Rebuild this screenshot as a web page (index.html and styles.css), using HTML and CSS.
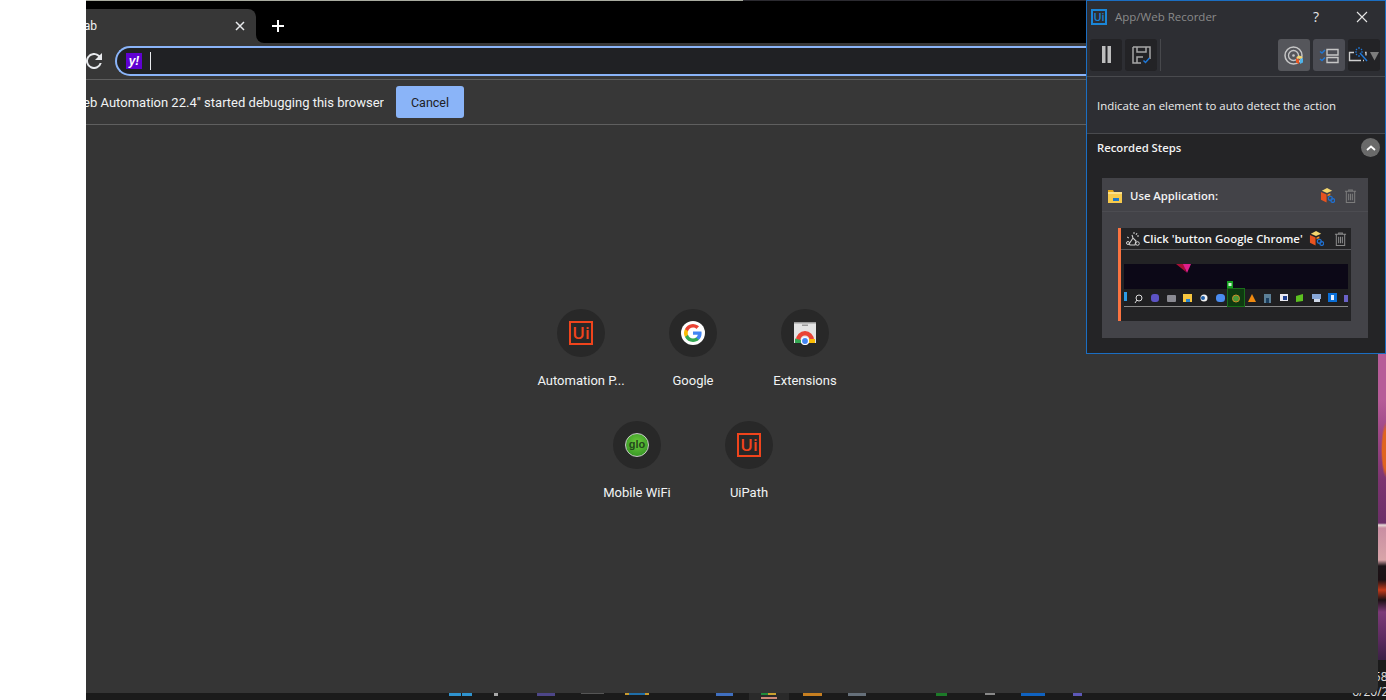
FILE: index.html
```html
<!DOCTYPE html>
<html lang="en">
<head>
<meta charset="utf-8">
<title>App/Web Recorder</title>
<link rel="stylesheet" href="styles.css">
</head>
<body>
<svg class="defs" width="0" height="0" aria-hidden="true">
  <symbol id="cube" viewBox="0 0 16 16">
    <path d="M7.500 0 13 2.800 7.500 5.400 2 2.800z" fill="#f5d76e"/>
    <path d="M1 4.200 7 7v8.500L1 12.600z" fill="#e8531f"/>
    <path d="M8 7l3-1.400V8a3 3 0 0 0-3 1z" fill="#f08a24"/>
    <circle cx="11" cy="11" r="2.100" fill="none" stroke="#1f6fd0" stroke-width="1.300"/>
    <circle cx="13.600" cy="13.400" r="2" fill="none" stroke="#1f6fd0" stroke-width="1.300"/>
  </symbol>
  <symbol id="trash" viewBox="0 0 14 15">
    <path d="M1 2.500h12M5 2.500V1h4v1.500M2.500 2.500v12h9v-12M5 5v7M7 5v7M9 5v7" fill="none" stroke="currentColor" stroke-width="1.100"/>
  </symbol>
</svg>
<div class="screen">
  <div class="blank"></div>
  <main class="desktop">
    <div class="wallpaper"></div>
    <footer class="taskbar">
      <div class="task-icons">
        <span class="sl s1"></span><span class="sl s2"></span><span class="sl s3"></span><span class="sl s4"></span><span class="sl s5"></span><span class="sl s6"></span><span class="sl s7"></span>
        <span class="task-active"><span class="sl s8"></span><span class="sl s9"></span></span>
        <span class="sl s10"></span><span class="sl s11"></span><span class="sl s12"></span><span class="sl s13"></span><span class="sl s14"></span><span class="sl s15"></span>
      </div>
      <div class="clock"><span>10:58 AM</span><span>6/20/2022</span></div>
    </footer>

    <section class="browser">
      <div class="topline"><span class="topline-a"></span><span class="topline-b"></span></div>
      <div class="strip">
        <div class="tab-wrap">
          <div class="tab">
            <div class="tab-label"><span>New Tab</span></div>
            <svg class="tab-close" viewBox="0 0 10 10"><path d="M1 1l8 8M9 1l-8 8" stroke="#e8eaed" stroke-width="1.500"/></svg>
          </div>
        </div>
        <div class="strip-rest">
          <svg class="new-tab" viewBox="0 0 14 14"><path d="M7 1v12M1 7h12" stroke="#fff" stroke-width="2"/></svg>
        </div>
      </div>
      <div class="toolbar">
        <svg class="reload" viewBox="4 4 16 16"><path fill="#e8eaed" d="M17.650 6.350A8 8 0 1 0 19.730 14h-2.080A6 6 0 1 1 12 6c1.660 0 3.140.69 4.220 1.780L13 11h7V4l-2.350 2.350z"/></svg>
        <div class="omnibox">
          <span class="yahoo">y!</span>
          <span class="caret"></span>
        </div>
      </div>
      <div class="infobar">
        <div class="info-text"><span>"UiPath Web Automation 22.4" started debugging this browser</span></div>
        <button class="cancel">Cancel</button>
      </div>
      <div class="ntp">
        <div class="tiles">
          <a class="tile"><span class="tile-icon"><span class="ui-logo">Ui</span></span><span class="tile-name">Automation P...</span></a>
          <a class="tile"><span class="tile-icon">
            <svg class="fav" viewBox="0 0 24 24"><circle cx="12" cy="12" r="12" fill="#fff"/>
              <path fill="#4285f4" d="M20.600 12.200c0-.62-.06-1.220-.16-1.800H12v3.400h4.830a4.130 4.130 0 0 1-1.790 2.710v2.250h2.900c1.700-1.560 2.660-3.860 2.660-6.560z"/>
              <path fill="#34a853" d="M12 21c2.430 0 4.460-.8 5.940-2.170l-2.900-2.250c-.8.540-1.830.86-3.040.86-2.340 0-4.320-1.580-5.030-3.700H4v2.330A9 9 0 0 0 12 21z"/>
              <path fill="#fbbc05" d="M6.970 13.740a5.400 5.400 0 0 1 0-3.480V7.930H4a9 9 0 0 0 0 8.140z"/>
              <path fill="#ea4335" d="M12 6.580c1.320 0 2.500.45 3.440 1.350l2.580-2.580A9 9 0 0 0 4 7.930l2.970 2.330C7.680 8.160 9.660 6.580 12 6.580z"/></svg>
          </span><span class="tile-name">Google</span></a>
          <a class="tile"><span class="tile-icon">
            <svg class="fav" viewBox="0 0 24 24">
              <path fill="#e4e4e4" d="M1 1h22v21H1z"/><path fill="#9a9a9a" d="M1 1h22v1.500H1zM9 3.500h6v1.500H9z"/>
              <path fill="#ea4335" d="M3 19a9 9 0 0 1 18 0h-4.500A4.500 4.500 0 0 0 7.500 19z"/>
              <path fill="#fbbc05" d="M16 18h6v4h-6z"/><path fill="#34a853" d="M2 17.500 8 19v3H2z"/>
              <circle cx="12" cy="20" r="3.500" fill="#4285f4" stroke="#fff" stroke-width="1.200"/>
            </svg>
          </span><span class="tile-name">Extensions</span></a>
          <a class="tile"><span class="tile-icon"><span class="glo">glo</span></span><span class="tile-name">Mobile WiFi</span></a>
          <a class="tile"><span class="tile-icon"><span class="ui-logo">Ui</span></span><span class="tile-name">UiPath</span></a>
        </div>
      </div>
    </section>

    <aside class="recorder">
      <header class="rec-title">
        <span class="rec-logo">Ui</span>
        <span class="rec-name">App/Web Recorder</span>
        <span class="rec-help">?</span>
        <svg class="rec-close" viewBox="0 0 12 12"><path d="M1 1l10 10M11 1 1 11" stroke="#e6e6e6" stroke-width="1.100"/></svg>
      </header>
      <div class="rec-tools">
        <button class="tool"><svg viewBox="0 0 32 32"><path d="M12 7h3.500v17H12zM17.500 7H21v17h-3.500z" fill="#bdbdbd"/></svg></button>
        <button class="tool"><svg viewBox="0 0 32 32"><path d="M8 8h17v12M8 8v16h8M12 8v5h9V8M12 24v-6h6" fill="none" stroke="#a6a6a6" stroke-width="1.500"/><path d="M18.500 21.500l2 2 4-4.500" fill="none" stroke="#1f78d8" stroke-width="1.500"/></svg></button>
        <span class="tool-sep"></span>
        <button class="tool tool-on tool-push"><svg viewBox="0 0 32 32"><circle cx="15.500" cy="16.500" r="8.500" fill="none" stroke="#c6c6c6" stroke-width="1.500"/><circle cx="15.500" cy="16.500" r="5" fill="none" stroke="#c6c6c6" stroke-width="1.300"/><circle cx="15.500" cy="16.500" r="1.300" fill="#c6c6c6"/><path d="M21.500 16.500l3.500 1.800-3.500 1.800-3.500-1.800z" fill="#f5d76e"/><path d="M18 19l3 1.500v4.500l-3-1.500z" fill="#e8531f"/><path d="M22 20.500l3-1.500v4.500L22 25z" fill="#4fb3e8"/></svg></button>
        <button class="tool tool-list"><svg viewBox="0 0 32 32"><path d="M14 10.500h11v5.500H14zM14 18.500h11v5H14z" fill="none" stroke="#c6c6c6" stroke-width="1.400"/><path d="M7 12.500l2 1.500 3-3M7 20l2 1.500 3-3" fill="none" stroke="#1f78d8" stroke-width="1.400"/></svg></button>
        <button class="tool"><svg viewBox="0 0 32 32"><path d="M6 13.500H1.500v8H13M15 21.500h1" fill="none" stroke="#cfcfcf" stroke-width="1.400"/><path d="M17 13.500h1v3" fill="none" stroke="#cfcfcf" stroke-width="1.300"/><path d="M8 10l1 1M11 8v2M14 10l-1 1M7 13h2M15 13h-2M8 16l1-1M11 18v-2" stroke="#1f78d8" stroke-width="1.200"/><path d="M12 14l7 8" stroke="#1f78d8" stroke-width="1.500"/><path d="M22 13h9l-4.500 8.500z" fill="#7d7d7d"/></svg></button>
      </div>
      <div class="rec-hint">Indicate an element to auto detect the action</div>
      <div class="rec-steps">
        <div class="steps-head">
          <span class="steps-title">Recorded Steps</span>
          <span class="steps-toggle"><svg viewBox="0 0 10 6"><path d="M1 5l4-3.500L9 5" fill="none" stroke="#fff" stroke-width="1.800"/></svg></span>
        </div>
        <div class="card">
          <div class="card-head">
            <svg class="folder" viewBox="0 0 15 14"><path d="M0 1h5l1 2H0z" fill="#e6a817"/><path d="M0 3h14v11H0z" fill="#f7ca4c"/><path d="M0 3h14v2H0z" fill="#fbe08a"/><path d="M5 9h6v3H5z" fill="#1f78c8"/></svg>
            <span class="card-title">Use Application:</span>
            <svg class="cube"><use href="#cube"/></svg>
            <svg class="trash"><use href="#trash"/></svg>
          </div>
          <div class="step">
            <div class="step-head">
              <svg class="click" viewBox="0 0 14 15"><path d="M3 13 7 7l3 3-1 4H4zM7 7l-1-3" fill="none" stroke="#d0d0d0" stroke-width="1.100"/><path d="M8 1v2M11 2l-1 2M13 5h-2M1 6l2 1" stroke="#d0d0d0"/><circle cx="11.500" cy="12.500" r="1.800" fill="none" stroke="#d0d0d0"/><circle cx="2" cy="12" r="1.500" fill="none" stroke="#d0d0d0"/></svg>
              <span class="step-title">Click 'button Google Chrome'</span>
              <svg class="cube cube-step"><use href="#cube"/></svg>
              <svg class="trash trash-step"><use href="#trash"/></svg>
            </div>
            <div class="step-body">
              <svg class="shot" viewBox="0 0 224 43">
                <rect width="224" height="25" fill="#0c0817"/>
                <rect y="25" width="224" height="18" fill="#1f1f21"/>
                <path d="M52 0h8l2 8z" fill="#a80f35"/><path d="M59 0h8l-4 9z" fill="#e01f8c"/>
                <rect y="42" width="224" height="1" fill="#8a8a8a"/>
                <rect x="103.500" y="24.500" width="17" height="18" fill="#0e3a10" stroke="#1a6e1a"/>
                <rect x="103" y="17" width="6" height="7" fill="#15a020"/><rect x="104.500" y="19" width="3" height="3" fill="#d8f0d8"/>
                <g transform="translate(0 1)">
                  <rect y="27" width="3" height="9" fill="#2b9be8"/>
                  <circle cx="15" cy="33" r="3" fill="none" stroke="#ddd"/><path d="M13 35l-2 3" stroke="#ddd"/>
                  <rect x="27" y="29" width="8" height="8" rx="3" fill="#5c53c4"/>
                  <rect x="43" y="30" width="9" height="7" rx="1" fill="#8a8a92"/>
                  <rect x="59" y="29" width="9" height="8" fill="#f7c63f"/><rect x="62" y="34" width="4" height="3" fill="#2a86d0"/>
                  <circle cx="80" cy="33" r="3.500" fill="#f0f0f0"/><circle cx="79" cy="33" r="2" fill="#1f5fa8"/>
                  <rect x="92" y="29" width="9" height="8" rx="3.500" fill="#4a8cf0"/>
                  <circle cx="112" cy="33.500" r="3.500" fill="#4a9a38" stroke="#d08a28"/>
                  <path d="M128 29l4 8h-8z" fill="#f08a10"/>
                  <rect x="140" y="29" width="7" height="9" fill="#5b7f96"/><rect x="142" y="33" width="3" height="5" fill="#1c3f60"/>
                  <rect x="156" y="29" width="8" height="7" fill="#e8e8f0"/><rect x="159" y="31" width="4" height="4" fill="#1f3f90"/>
                  <path d="M172 31l7-2v7l-7 1z" fill="#5cc020"/>
                  <rect x="188" y="29" width="9" height="5" fill="#88a8d8"/><rect x="190" y="34" width="6" height="3" fill="#cfd8e8"/>
                  <rect x="204" y="28" width="9" height="9" fill="#0a6fd8"/><rect x="207" y="30" width="3" height="5" fill="#e8f0ff"/>
                  <rect x="220" y="30" width="4" height="7" fill="#6a62c8"/>
                </g>
              </svg>
            </div>
          </div>
        </div>
      </div>
    </aside>
  </main>
</div>
</body>
</html>
```

FILE: styles.css
```css
* { box-sizing: border-box; }

html, body {
  margin: 0;
  height: 100%;
  background: #fff;
}

.defs { position: absolute; }

.screen {
  display: grid;
  grid-template-columns: 86px 1fr;
  width: 1386px;
  height: 700px;
  overflow: hidden;
}

.blank { background: #fff; }

/* desktop */
.desktop {
  position: relative;
  display: flex;
  flex-direction: column;
  overflow: hidden;
  background: #1b1b1b;
}

.wallpaper {
  height: 660px;
  background:
    radial-gradient(ellipse 5px 28px at 1300px 450px, #e0651f 0, #e0651f 70%, transparent 100%),
    linear-gradient(#b65c98 0, #b65c98 400px, #a04a88 430px, #7c3470 480px, #6c2f68 523px, #e8dcd8 525px, #c98ea2 528px, #d8a4a8 560px, #1c1418 566px, #1c1014 580px, #c23a1a 590px, #1c1014 600px, #7c3a78 612px, #5a2a5e 640px, #3a2044 660px);
}

.taskbar {
  flex: 1;
  display: flex;
  align-items: flex-end;
  justify-content: space-between;
  background: #1b1b1b;
}

.task-icons {
  display: flex;
  align-items: flex-start;
  height: 7px;
  padding-left: 363px;
}

.sl { display: block; height: 3px; }
.s1 { width: 12px; background: #2e93cf; }
.s2 { width: 10px; margin-left: 1px; background: #2e93cf; }
.s3 { width: 4px; margin-left: 22px; background: #a8a8a8; }
.s4 { width: 18px; margin-left: 39px; background: #4d4688; }
.s5 { width: 23px; margin-left: 26px; height: 1px; background: #555; }
.s6 { width: 24px; margin-left: 21px; height: 2px; background: linear-gradient(90deg, #c99a2e 15%, #1f6ea8 15%, #1f6ea8 85%, #c99a2e 85%); }
.s7 { width: 17px; margin-left: 67px; background: #3f6fc0; }
.task-active {
  display: block;
  width: 40px;
  height: 7px;
  margin-left: 16px;
  padding-left: 12px;
  background: #2a2a2a;
}
.s8 { width: 15px; height: 2px; background: linear-gradient(90deg, #1f8a3a 50%, #c9a02e 50%); }
.s9 { width: 16px; height: 2px; margin-top: 2px; background: #d08a78; }
.s10 { width: 19px; margin-left: 14px; background: #c77f20; }
.s11 { width: 18px; margin-left: 26px; background: #66707a; }
.s12 { width: 11px; margin-left: 70px; background: #1c7a28; }
.s13 { width: 10px; margin-left: 38px; height: 2px; background: #888; }
.s14 { width: 24px; margin-left: 26px; background: #0f62c0; }
.s15 { width: 9px; margin-left: 28px; background: #5d58b8; }

.clock {
  display: flex;
  flex-direction: column;
  align-items: flex-end;
  flex: 0 0 33px;
  font: 12px/15px "Open Sans", sans-serif;
  color: #e0e0e0;
  white-space: nowrap;
  padding-bottom: 1px;
}
.clock span:first-child { margin-right: -23px; }
.clock span:last-child { margin-right: -23px; }

/* browser window */
.browser {
  position: absolute;
  top: 0;
  left: 0;
  display: flex;
  flex-direction: column;
  width: 1292px;
  height: 693px;
  overflow: hidden;
  border-bottom-right-radius: 6px;
  background: #353535;
  font-family: Roboto, sans-serif;
}

.topline { display: flex; height: 1px; flex: none; }
.topline-a { width: 657px; background: #a9aca0; }
.topline-b { flex: 1; background: #2b2a30; }

.strip {
  display: flex;
  height: 42px;
  flex: none;
  background: #373737;
}

.tab-wrap {
  flex: 0 0 170px;
  padding-top: 8px;
  background: #000;
}

.tab {
  display: flex;
  align-items: center;
  height: 34px;
  background: #373737;
  border-top-right-radius: 8px;
}

.tab-label {
  display: flex;
  justify-content: flex-end;
  flex: 0 0 11px;
  overflow: hidden;
  font-size: 12px;
  color: #f1f3f4;
  white-space: nowrap;
}
.tab-label span { flex: none; }

.tab-close { width: 10px; height: 10px; margin-left: auto; margin-right: 11px; }

.strip-rest {
  flex: 1;
  display: flex;
  align-items: center;
  padding: 8px 0 0 15px;
  background: #000;
  border-bottom-left-radius: 8px;
}

.new-tab { width: 14px; height: 14px; }

.toolbar {
  display: flex;
  align-items: center;
  height: 36px;
  flex: none;
  background: #373737;
}

.reload { width: 16px; height: 16px; flex: none; }

.omnibox {
  display: flex;
  align-items: center;
  flex: 1;
  height: 30px;
  margin-left: 13px;
  padding-left: 9px;
  border: 2px solid #8ab4f8;
  border-right: 0;
  border-radius: 15px 0 0 15px;
  background: #202124;
}

.yahoo {
  width: 16px;
  height: 16px;
  background: #6001d2;
  color: #fff;
  font: italic 700 12px/16px "Liberation Sans", sans-serif;
  text-align: center;
}

.caret { width: 1px; height: 18px; margin-left: 8px; background: #e8eaed; }

.infobar {
  display: flex;
  align-items: center;
  flex: none;
  height: 46px;
  border-top: 1px solid #5f5f5f;
  border-bottom: 1px solid #5f5f5f;
  background: #373737;
}

.info-text {
  display: flex;
  justify-content: flex-end;
  flex: 0 0 298px;
  overflow: hidden;
  font-size: 13px;
  color: #f1f3f4;
  white-space: nowrap;
}
.info-text span { flex: none; }

.cancel {
  width: 68px;
  height: 32px;
  margin-left: 12px;
  border: 0;
  border-radius: 3px;
  background: #8ab4f8;
  color: #202124;
  font: 400 12.5px Roboto, sans-serif;
}

.ntp {
  flex: 1;
  display: flex;
  align-items: center;
  justify-content: center;
  padding-right: 78px;
}

.tiles {
  display: flex;
  flex-wrap: wrap;
  justify-content: center;
  width: 336px;
}

.tile {
  display: flex;
  flex-direction: column;
  align-items: center;
  width: 112px;
  height: 112px;
  padding-top: 12px;
}

.tile-icon {
  display: flex;
  align-items: center;
  justify-content: center;
  width: 48px;
  height: 48px;
  border-radius: 50%;
  background: #282828;
}

.tile-name {
  margin-top: 16px;
  font-size: 13px;
  line-height: 16px;
  color: #f1f3f4;
  white-space: nowrap;
}

.fav { width: 24px; height: 24px; }

.ui-logo {
  width: 24px;
  height: 24px;
  border: 2px solid #f0441c;
  color: #f0441c;
  font: 600 17px/19px "Open Sans", sans-serif;
  text-align: center;
}

.glo {
  width: 24px;
  height: 24px;
  border-radius: 50%;
  border: 1px solid #c8c8c8;
  background: radial-gradient(circle at 50% 40%, #6ccc3c, #2a8a20);
  color: #23481c;
  font: 700 11px/20px "Liberation Sans", sans-serif;
  text-align: center;
}

/* recorder */
.recorder {
  position: absolute;
  top: 0;
  right: 0;
  display: flex;
  flex-direction: column;
  width: 300px;
  height: 354px;
  border: 1px solid #1b6ec2;
  background: #2d2e33;
  font-family: "Open Sans", sans-serif;
  color: #e6e6e6;
}

.rec-title {
  display: flex;
  align-items: center;
  height: 31px;
  flex: none;
  padding-left: 4px;
}

.rec-logo {
  width: 16px;
  height: 16px;
  border: 2px solid #1a86d8;
  color: #1a86d8;
  font: 600 11px/12px "Open Sans", sans-serif;
  text-align: center;
}

.rec-name {
  margin-left: 8px;
  font-size: 11.5px;
  color: #8a8a8a;
}

.rec-help {
  margin-left: auto;
  font-size: 14px;
  color: #e6e6e6;
}

.rec-close {
  width: 12px;
  height: 12px;
  margin: 0 17px 0 37px;
}

.rec-tools {
  display: flex;
  align-items: flex-start;
  flex: none;
  height: 45px;
  padding: 7px 5px 0 3px;
  border-bottom: 1px solid #494a4e;
}

.tool {
  width: 32px;
  height: 32px;
  padding: 0;
  border: 0;
  border-radius: 3px;
  background: #232326;
}
.tool svg { display: block; width: 32px; height: 32px; }
.tool + .tool { margin-left: 3px; }

.tool-sep { width: 1px; height: 32px; margin-left: 3px; background: #47484c; }
.tool-push { margin-left: auto; }
.tool-on { background: #55565b; }
.tool-list { background: #4c4d54; }

.rec-hint {
  display: flex;
  align-items: center;
  flex: none;
  height: 57px;
  padding-left: 10px;
  border-bottom: 1px solid #494a4e;
  font-size: 11.43px;
  color: #ececec;
}

.rec-steps {
  flex: 1;
  padding: 0 16px 0 15px;
  background: #242426;
}

.steps-head {
  display: flex;
  align-items: center;
  justify-content: space-between;
  height: 44px;
  padding-bottom: 17px;
  margin: 0 -11px 0 -5px;
}

.steps-title { font-size: 11.3px; font-weight: 600; color: #f2f2f2; margin-bottom: 1px; }

.steps-toggle {
  display: flex;
  align-items: center;
  justify-content: center;
  width: 19px;
  height: 19px;
  border-radius: 50%;
  background: #6a6a6a;
}
.steps-toggle svg { width: 10px; height: 6px; }

.card {
  height: 160px;
  width: 266px;
  background: #434348;
}

.card-head {
  display: flex;
  align-items: center;
  height: 34px;
  padding: 2px 0 0 6px;
  border-bottom: 1px solid #4c4c51;
}

.folder { width: 15px; height: 14px; flex: none; }

.card-title {
  margin-left: 7px;
  font-size: 11.3px;
  font-weight: 600;
  color: #f2f2f2;
}

.cube { width: 15px; height: 15px; flex: none; }
.trash { width: 13px; height: 14px; flex: none; color: #7c7c7c; }

.card-head .cube { margin-left: auto; }
.card-head .trash { margin: 0 11px 0 9px; }

.step {
  width: 233px;
  height: 93px;
  margin: 16px 0 0 16px;
  border-left: 3px solid #fb7441;
  background: #232325;
}

.step-head {
  display: flex;
  align-items: center;
  height: 22px;
  padding-left: 5px;
  border-bottom: 1px solid #56565a;
}

.click { width: 14px; height: 15px; flex: none; }

.step-title {
  margin-left: 3px;
  font-size: 11.4px;
  font-weight: 600;
  color: #f6f6f6;
  white-space: nowrap;
}

.cube-step { margin-left: 6px; }
.trash-step { margin-left: 10px; color: #8a8a8a; }

.step-body { padding: 14px 0 0 3px; }
.shot { display: block; width: 224px; height: 43px; }
```
